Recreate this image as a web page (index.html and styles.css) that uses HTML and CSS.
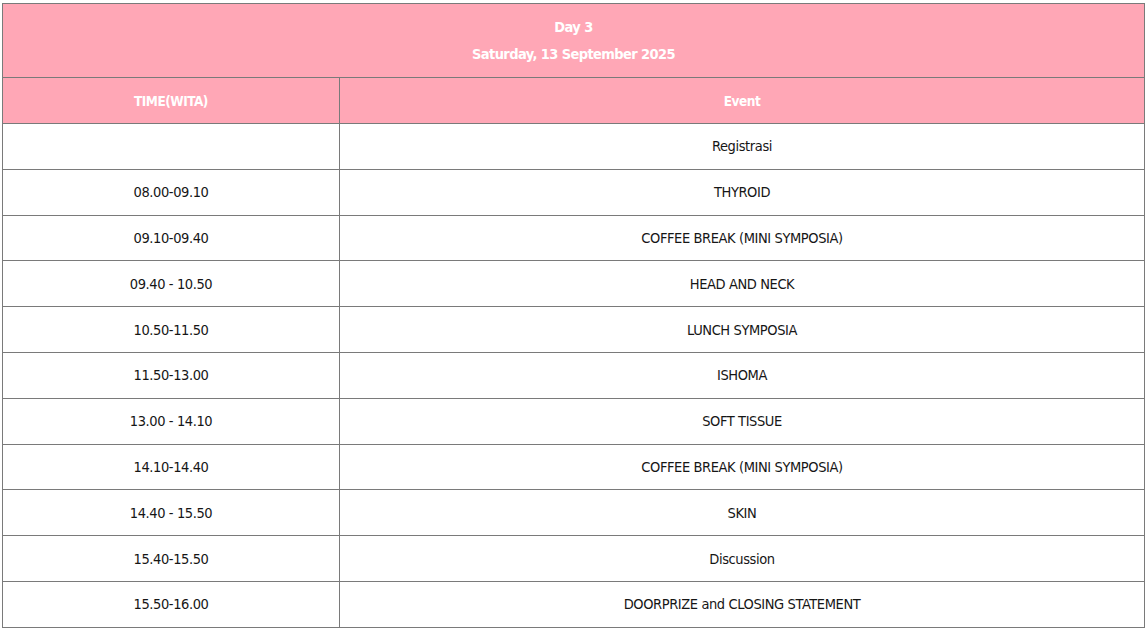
FILE: index.html
```html
<!DOCTYPE html>
<html lang="id">
<head>
<meta charset="utf-8">
<title>Day 3 Schedule</title>
<link rel="stylesheet" href="styles.css">
</head>
<body>
<div class="wrap">
  <table class="schedule">
    <colgroup>
      <col class="col-time">
      <col class="col-event">
    </colgroup>
    <thead>
      <tr class="title-row">
        <th colspan="2">Day 3<br>Saturday, 13 September 2025</th>
      </tr>
      <tr class="head-row">
        <th>TIME(WITA)</th>
        <th>Event</th>
      </tr>
    </thead>
    <tbody>
      <tr><td></td><td>Registrasi</td></tr>
      <tr><td>08.00-09.10</td><td>THYROID</td></tr>
      <tr><td>09.10-09.40</td><td>COFFEE BREAK (MINI SYMPOSIA)</td></tr>
      <tr><td>09.40 - 10.50</td><td>HEAD AND NECK</td></tr>
      <tr><td>10.50-11.50</td><td>LUNCH SYMPOSIA</td></tr>
      <tr><td>11.50-13.00</td><td>ISHOMA</td></tr>
      <tr><td>13.00 - 14.10</td><td>SOFT TISSUE</td></tr>
      <tr><td>14.10-14.40</td><td>COFFEE BREAK (MINI SYMPOSIA)</td></tr>
      <tr><td>14.40 - 15.50</td><td>SKIN</td></tr>
      <tr><td>15.40-15.50</td><td>Discussion</td></tr>
      <tr><td>15.50-16.00</td><td>DOORPRIZE and CLOSING STATEMENT</td></tr>
    </tbody>
  </table>
</div>
</body>
</html>
```
FILE: styles.css
```css
html, body {
  margin: 0;
  padding: 0;
  background: #ffffff;
}

.wrap {
  padding: 3px 2px 0 2px;
}

.schedule {
  width: 100%;
  border-collapse: collapse;
  table-layout: fixed;
  font-family: "DejaVu Sans Condensed", "Liberation Sans", sans-serif;
  font-stretch: condensed;
  font-size: 14.5px;
  letter-spacing: -0.4px;
  color: #161616;
  text-align: center;
}

.col-time {
  width: 337px;
}

.schedule th,
.schedule td {
  border: 1px solid #7a7a7a;
  padding: 0;
  vertical-align: middle;
  text-align: center;
}

.title-row th {
  background: #ffa7b6;
  color: #ffffff;
  font-weight: bold;
  font-size: 14.5px;
  letter-spacing: -0.6px;
  line-height: 27px;
  height: 73px;
}

.head-row th {
  background: #ffa7b6;
  color: #ffffff;
  font-weight: bold;
  font-size: 13.5px;
  letter-spacing: -0.5px;
  height: 45px;
}

.schedule tbody tr {
  height: 45.8px;
}
```
